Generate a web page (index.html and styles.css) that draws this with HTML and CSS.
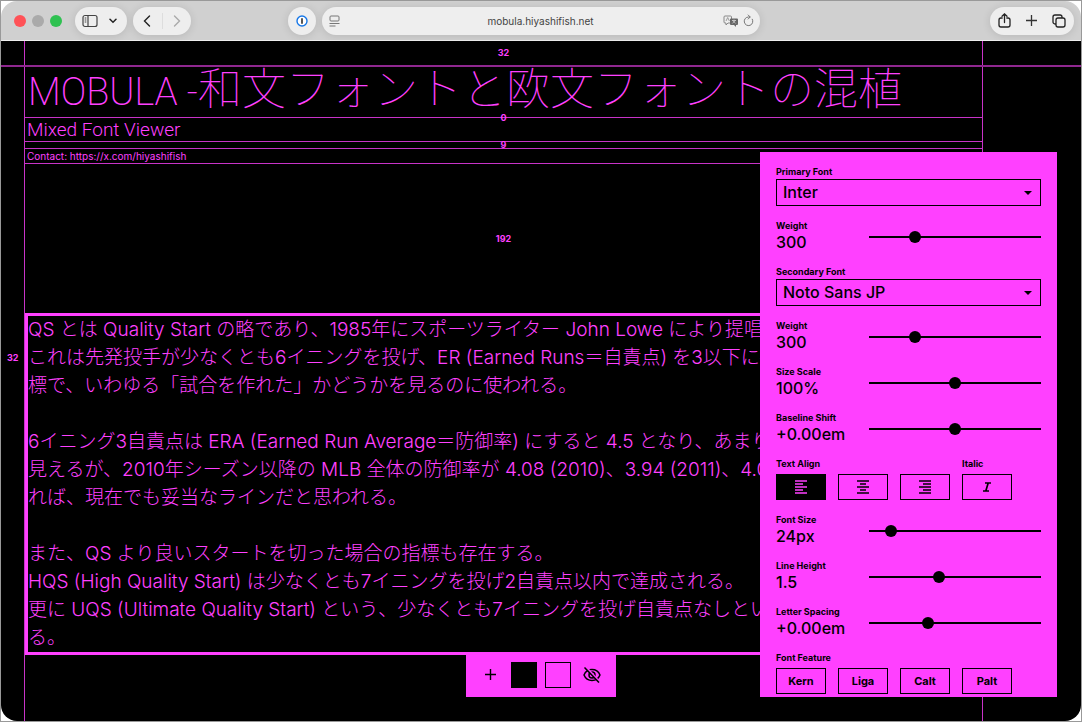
FILE: index.html
```html
<!DOCTYPE html>
<html lang="ja">
<head>
    <meta charset="UTF-8">
    <meta name="viewport" content="width=device-width, initial-scale=1.0">
    <title>MOBULA</title>
    <link rel="stylesheet" href="styles.css">
</head>
<body>

<div class="window">
    <div class="browser-bar">
        <div class="bar-side">
            <div class="lights">
                <span class="light red"></span>
                <span class="light gray"></span>
                <span class="light green"></span>
            </div>
            <div class="pill sidebar-pill">
                <button aria-label="Sidebar">
                    <svg width="16" height="14" viewBox="0 0 16 14" fill="none" stroke="#444" stroke-width="1.2"><rect x="1" y="1.5" width="14" height="11" rx="2"/><path d="M6 1.5v11M2.7 4h1.6M2.7 6h1.6M2.7 8h1.6"/></svg>
                </button>
                <button aria-label="Tab groups">
                    <svg width="8" height="6" viewBox="0 0 8 6" fill="none" stroke="#222" stroke-width="1.5" stroke-linecap="round"><path d="M1 1.2l3 3 3-3"/></svg>
                </button>
            </div>
            <div class="pill nav-pill">
                <button aria-label="Back">
                    <svg width="8" height="12" viewBox="0 0 8 12" fill="none" stroke="#222" stroke-width="1.4" stroke-linecap="round"><path d="M6.5 1l-5 5 5 5"/></svg>
                </button>
                <span class="divider"></span>
                <button aria-label="Forward">
                    <svg width="8" height="12" viewBox="0 0 8 12" fill="none" stroke="#aaa" stroke-width="1.4" stroke-linecap="round"><path d="M1.5 1l5 5-5 5"/></svg>
                </button>
            </div>
            <button class="pill round" aria-label="Password manager">
                <svg width="12" height="12" viewBox="0 0 12 12"><circle cx="6" cy="6" r="5" fill="#fff" stroke="#1677e8" stroke-width="1.4"/><path d="M6 3.2v5.6" stroke="#444" stroke-width="1.8"/></svg>
            </button>
        </div>
        <div class="pill address">
            <svg width="11" height="12" viewBox="0 0 11 12" fill="none" stroke="#777"><rect x="1" y="1" width="9" height="5" rx="1"/><path d="M.5 8.5h10M.5 11h6"/></svg>
            <span class="url">mobula.hiyashifish.net</span>
            <svg width="16" height="12" viewBox="0 0 16 12"><path d="M2 1h5.500a1 1 0 0 1 1 1v5a1 1 0 0 1-1 1H5L3 10V8H2a1 1 0 0 1-1-1V2a1 1 0 0 1 1-1z" fill="none" stroke="#888"/><path d="M3 6l1.700-3.500L6.400 6" fill="none" stroke="#888" stroke-width=".8"/><path d="M8 3.500h6a1 1 0 0 1 1 1V9a1 1 0 0 1-1 1h-1v2l-2-2H8a1 1 0 0 1-1-1V4.500a1 1 0 0 1 1-1z" fill="#666"/><path d="M9 5.500h4M11 4.500v1M9.300 8.500l3-3M12.700 8.500l-3-3" stroke="#ddd" stroke-width=".7"/></svg>
            <svg width="11" height="13" viewBox="0 0 11 13" fill="none" stroke="#777" stroke-linecap="round"><path d="M9.300 5.200A4.300 4.300 0 1 1 5.500 3H7M5.200 1L7.200 3l-2 2"/></svg>
        </div>
        <div class="bar-side right">
            <div class="pill tools-pill">
                <button aria-label="Share">
                    <svg width="13" height="15" viewBox="0 0 13 15" fill="none" stroke="#222" stroke-width="1.3" stroke-linecap="round"><path d="M4.200 5H3a2 2 0 0 0-2 2v5a2 2 0 0 0 2 2h7a2 2 0 0 0 2-2V7a2 2 0 0 0-2-2H8.800M6.500 9.500V1M4 3.300L6.500 1 9 3.300"/></svg>
                </button>
                <button aria-label="New tab">
                    <svg width="11" height="11" viewBox="0 0 11 11" stroke="#333" stroke-width="1.3"><path d="M5.500 0v11M0 5.500h11"/></svg>
                </button>
                <button aria-label="Tabs">
                    <svg width="14" height="14" viewBox="0 0 14 14" fill="none" stroke="#222" stroke-width="1.3"><rect x="4" y="4" width="9" height="9" rx="2"/><path d="M4 10H3a2 2 0 0 1-2-2V3a2 2 0 0 1 2-2h5a2 2 0 0 1 2 2v1"/></svg>
                </button>
            </div>
        </div>
    </div>

    <main class="page">
        <div class="column">
            <div class="space space-top"><span class="size">32</span></div>
            <hr class="rule">
            <h1><span class="latin">MOBULA -</span>和文フォントと欧文フォントの混植</h1>
            <div class="space space-none"><span class="size">0</span></div>
            <p class="subtitle">Mixed Font Viewer</p>
            <div class="space space-small"><span class="size">9</span></div>
            <p class="contact">Contact: <a href="https://x.com/hiyashifish">https://x.com/hiyashifish</a></p>
            <div class="space space-large"><span class="size">192</span></div>
            <textarea class="sample" rows="12" wrap="off" spellcheck="false" aria-label="Sample text">QS とは Quality Start の略であり、1985年にスポーツライター John Lowe により提唱さ
これは先発投手が少なくとも6イニングを投げ、ER (Earned Runs＝自責点) を3以下に抑
標で、いわゆる「試合を作れた」かどうかを見るのに使われる。

6イニング3自責点は ERA (Earned Run Average＝防御率) にすると 4.5 となり、あまり
見えるが、2010年シーズン以降の MLB 全体の防御率が 4.08 (2010)、3.94 (2011)、4.01
れば、現在でも妥当なラインだと思われる。

また、QS より良いスタートを切った場合の指標も存在する。
HQS (High Quality Start) は少なくとも7イニングを投げ2自責点以内で達成される。
更に UQS (Ultimate Quality Start) という、少なくとも7イニングを投げ自責点なしとい
る。</textarea>
        </div>
        <span class="size size-left">32</span>

        <form class="panel">
            <div class="field">
                <label for="primary">Primary Font</label>
                <div class="select-box">
                    <select id="primary"><option>Inter</option></select>
                    <svg width="8" height="4" viewBox="0 0 8 4"><path d="M0 0h8L4 4z"/></svg>
                </div>
            </div>
            <div class="field slider">
                <label for="weight1">Weight</label>
                <output for="weight1">300</output>
                <input type="range" id="weight1" min="100" max="900" value="300">
            </div>
            <div class="field">
                <label for="secondary">Secondary Font</label>
                <div class="select-box">
                    <select id="secondary"><option>Noto Sans JP</option></select>
                    <svg width="8" height="4" viewBox="0 0 8 4"><path d="M0 0h8L4 4z"/></svg>
                </div>
            </div>
            <div class="field slider">
                <label for="weight2">Weight</label>
                <output for="weight2">300</output>
                <input type="range" id="weight2" min="100" max="900" value="300">
            </div>
            <div class="field slider">
                <label for="scale">Size Scale</label>
                <output for="scale">100%</output>
                <input type="range" id="scale" min="50" max="150" value="100">
            </div>
            <div class="field slider">
                <label for="baseline">Baseline Shift</label>
                <output for="baseline">+0.00em</output>
                <input type="range" id="baseline" min="-50" max="50" value="0">
            </div>
            <div class="groups">
                <div class="group" role="group" aria-labelledby="align-label">
                    <span class="label" id="align-label">Text Align</span>
                    <div class="buttons">
                        <button type="button" class="active" aria-label="Left"><svg width="12" height="14" viewBox="0 0 12 14" stroke="currentColor" stroke-width="1.4"><path d="M0 1h12M0 4h8M0 7h12M0 10h8M0 13h12"/></svg></button>
                        <button type="button" aria-label="Center"><svg width="12" height="14" viewBox="0 0 12 14" stroke="currentColor" stroke-width="1.4"><path d="M0 1h12M3 4h6M0 7h12M3 10h6M0 13h12"/></svg></button>
                        <button type="button" aria-label="Right"><svg width="12" height="14" viewBox="0 0 12 14" stroke="currentColor" stroke-width="1.4"><path d="M0 1h12M4 4h8M0 7h12M4 10h8M0 13h12"/></svg></button>
                    </div>
                </div>
                <div class="group" role="group" aria-labelledby="italic-label">
                    <span class="label" id="italic-label">Italic</span>
                    <div class="buttons">
                        <button type="button" aria-label="Italic"><svg width="10" height="10" viewBox="0 0 10 10" fill="none" stroke="currentColor" stroke-width="1.7"><path d="M3 1h6M1 9h6M6.200 1L3.800 9"/></svg></button>
                    </div>
                </div>
            </div>
            <div class="field slider">
                <label for="size">Font Size</label>
                <output for="size">24px</output>
                <input type="range" id="size" min="10" max="154" value="24">
            </div>
            <div class="field slider">
                <label for="line">Line Height</label>
                <output for="line">1.5</output>
                <input type="range" id="line" min="5" max="30" value="15">
            </div>
            <div class="field slider">
                <label for="spacing">Letter Spacing</label>
                <output for="spacing">+0.00em</output>
                <input type="range" id="spacing" min="-10" max="20" value="0">
            </div>
            <div class="group" role="group" aria-labelledby="feature-label">
                <span class="label" id="feature-label">Font Feature</span>
                <div class="buttons">
                    <button type="button">Kern</button>
                    <button type="button">Liga</button>
                    <button type="button">Calt</button>
                    <button type="button">Palt</button>
                </div>
            </div>
        </form>

        <div class="dock">
            <button aria-label="Add"><svg width="11" height="11" viewBox="0 0 11 11" stroke="#000" stroke-width="1.4"><path d="M5.500 0v11M0 5.500h11"/></svg></button>
            <input type="color" value="#000000" aria-label="Background color">
            <input type="color" value="#ff40ff" aria-label="Text color">
            <button aria-label="Hide guides"><svg width="18" height="16" viewBox="0 0 18 16" fill="none" stroke="#000" stroke-width="1.5"><path d="M1 8c1.500-3.600 4.500-5.500 8-5.500s6.500 1.900 8 5.500c-1.500 3.600-4.500 5.500-8 5.500S2.500 11.600 1 8z"/><circle cx="9" cy="8" r="3"/><path d="M3.500.5l13 14.500" stroke="#ff40ff" stroke-width="2"/><path d="M1.500.5l14.500 15"/></svg></button>
        </div>
    </main>
</div>

</body>
</html>
```
FILE: styles.css
```css
* {
    box-sizing: border-box;
}
body {
    margin: 0;
    background-color: #fff;
    font-family: Inter, "Noto Sans CJK JP", sans-serif;
    color: #ff40ff;
}
h1, p {
    margin: 0;
}
button {
    display: flex;
    align-items: center;
    justify-content: center;
    padding: 0;
    border: none;
    background: none;
    font-family: inherit;
    cursor: pointer;
}
.window {
    display: flex;
    flex-direction: column;
    height: 100vh;
    border: 1px solid #999;
}

/* browser bar */
.browser-bar {
    display: flex;
    align-items: center;
    gap: 6px;
    height: 40px;
    flex: none;
    padding: 0 7px;
    background-color: #d0d0d0;
    border-bottom: 1px solid #eee;
    border-radius: 16px 16px 0 0;
}
.bar-side {
    display: flex;
    flex: 1;
    align-items: center;
    gap: 6px;
}
.bar-side.right {
    justify-content: flex-end;
}
.lights {
    display: flex;
    gap: 6px;
    margin: 0 7px 0 6px;
}
.light {
    width: 12px;
    height: 12px;
    border-radius: 50%;
}
.red {
    background-color: #ff5257;
}
.gray {
    background-color: #aaa;
}
.green {
    background-color: #2fc151;
}
.pill {
    display: flex;
    align-items: center;
    height: 28px;
    border-radius: 14px;
    background-color: #eee;
    box-shadow: 0 1px 8px rgba(0, 0, 0, 0.12);
}
.sidebar-pill {
    gap: 11px;
    padding: 0 10px 0 7px;
}
.nav-pill {
    gap: 8px;
    padding: 0 10px;
}
.divider {
    width: 1px;
    height: 16px;
    margin: 0 2px 0 3px;
    background-color: #ddd;
}
.round {
    width: 28px;
    margin-left: auto;
}
.address {
    flex: 0 0 438px;
    gap: 4px;
    padding: 0 6px 0 7px;
}
.url {
    flex: 1;
    padding-left: 18px;
    text-align: center;
    font-size: 10px;
    color: #444;
}
.tools-pill {
    gap: 15px;
    padding: 0 8px;
}

/* page */
.page {
    position: relative;
    display: flex;
    flex: 1;
    min-height: 0;
    background-color: #000;
    border-radius: 0 0 16px 16px;
    overflow: hidden;
}
.column {
    flex: 1;
    margin: 0 98px 0 23px;
    border: solid #c833c8;
    border-width: 0 1px;
}
.space {
    display: flex;
    align-items: center;
    justify-content: center;
}
.space-top {
    height: 24px;
}
.space-none {
    height: 1px;
    background-color: #c833c8;
}
.space-small {
    height: 8px;
    border: solid #c833c8;
    border-width: 1px 0;
}
.space-large {
    height: 150px;
    border-top: 1px solid #c833c8;
}
.size {
    font-size: 9px;
    line-height: 12px;
    font-weight: 700;
}
.size-left {
    position: absolute;
    top: 311px;
    left: 6px;
}
.rule {
    height: 2px;
    margin: 0 -99px 0 -24px;
    border: none;
    background-color: #8f278f;
}
h1 {
    height: 50px;
    padding-left: 3px;
    font-family: Roboto, "Noto Sans CJK JP", sans-serif;
    font-size: 44px;
    line-height: 46px;
    font-weight: 100;
    white-space: nowrap;
}
.latin {
    font-size: 38px;
    font-weight: 200;
}
.subtitle {
    padding-left: 2px;
    font-family: Roboto, sans-serif;
    font-size: 19px;
    line-height: 23px;
    font-weight: 300;
}
.contact {
    padding-left: 2px;
    font-size: 10px;
    line-height: 14px;
    font-weight: 400;
}
.contact a {
    color: inherit;
    text-decoration: none;
}
.sample {
    display: block;
    width: 100%;
    padding: 0;
    border: 3px solid #ff40ff;
    background: none;
    color: #ff40ff;
    font-family: Inter, "Noto Sans CJK JP", sans-serif;
    font-size: 19px;
    line-height: 28px;
    font-weight: 300;
    resize: none;
    overflow: hidden;
}

/* settings panel */
.panel {
    position: absolute;
    top: 111px;
    right: 24px;
    bottom: 24px;
    width: 297px;
    display: flex;
    flex-direction: column;
    gap: 13px;
    padding: 13px 16px 0;
    background-color: #ff40ff;
    color: #000;
    overflow: hidden;
}
.field, .group {
    display: flex;
    flex-direction: column;
}
.panel label, .label {
    font-size: 9px;
    line-height: 14px;
    font-weight: 700;
}
.select-box {
    position: relative;
}
.select-box svg {
    position: absolute;
    top: 12px;
    right: 9px;
    pointer-events: none;
}
select {
    display: block;
    width: 100%;
    height: 27px;
    padding: 0 6px 2px;
    border: 1px solid #000;
    border-radius: 0;
    background: none;
    appearance: none;
    color: #000;
    font-family: inherit;
    font-size: 16px;
    font-weight: 500;
}
.slider {
    display: grid;
    grid-template-columns: 93px 1fr;
    align-items: end;
}
.slider output {
    grid-row: 2;
    font-size: 16px;
    line-height: 19px;
    font-weight: 500;
}
.slider input {
    grid-column: 2;
    grid-row: 1 / 3;
    width: 100%;
    height: 30px;
    margin: 0;
    background: none;
    appearance: none;
}
.slider input::-webkit-slider-runnable-track {
    height: 2px;
    background-color: #000;
}
.slider input::-webkit-slider-thumb {
    width: 12px;
    height: 12px;
    margin-top: -5px;
    border-radius: 50%;
    background-color: #000;
    appearance: none;
}
.groups {
    display: flex;
    gap: 12px;
}
.group {
    gap: 3px;
}
.buttons {
    display: flex;
    gap: 12px;
}
.buttons button {
    width: 50px;
    height: 26px;
    border: 1px solid #000;
    color: #000;
    font-size: 11px;
    font-weight: 700;
}
.buttons .active {
    background-color: #000;
    color: #ff40ff;
}

/* bottom dock */
.dock {
    position: absolute;
    bottom: 24px;
    left: 50%;
    transform: translateX(-50%);
    display: flex;
    align-items: center;
    justify-content: center;
    gap: 8px;
    width: 150px;
    height: 45px;
    background-color: #ff40ff;
}
.dock button, .dock input {
    width: 26px;
    height: 26px;
}
.dock input {
    padding: 0;
    border: 1px solid #000;
    background: none;
    appearance: none;
}
.dock input::-webkit-color-swatch-wrapper {
    padding: 0;
}
.dock input::-webkit-color-swatch {
    border: none;
}
```
